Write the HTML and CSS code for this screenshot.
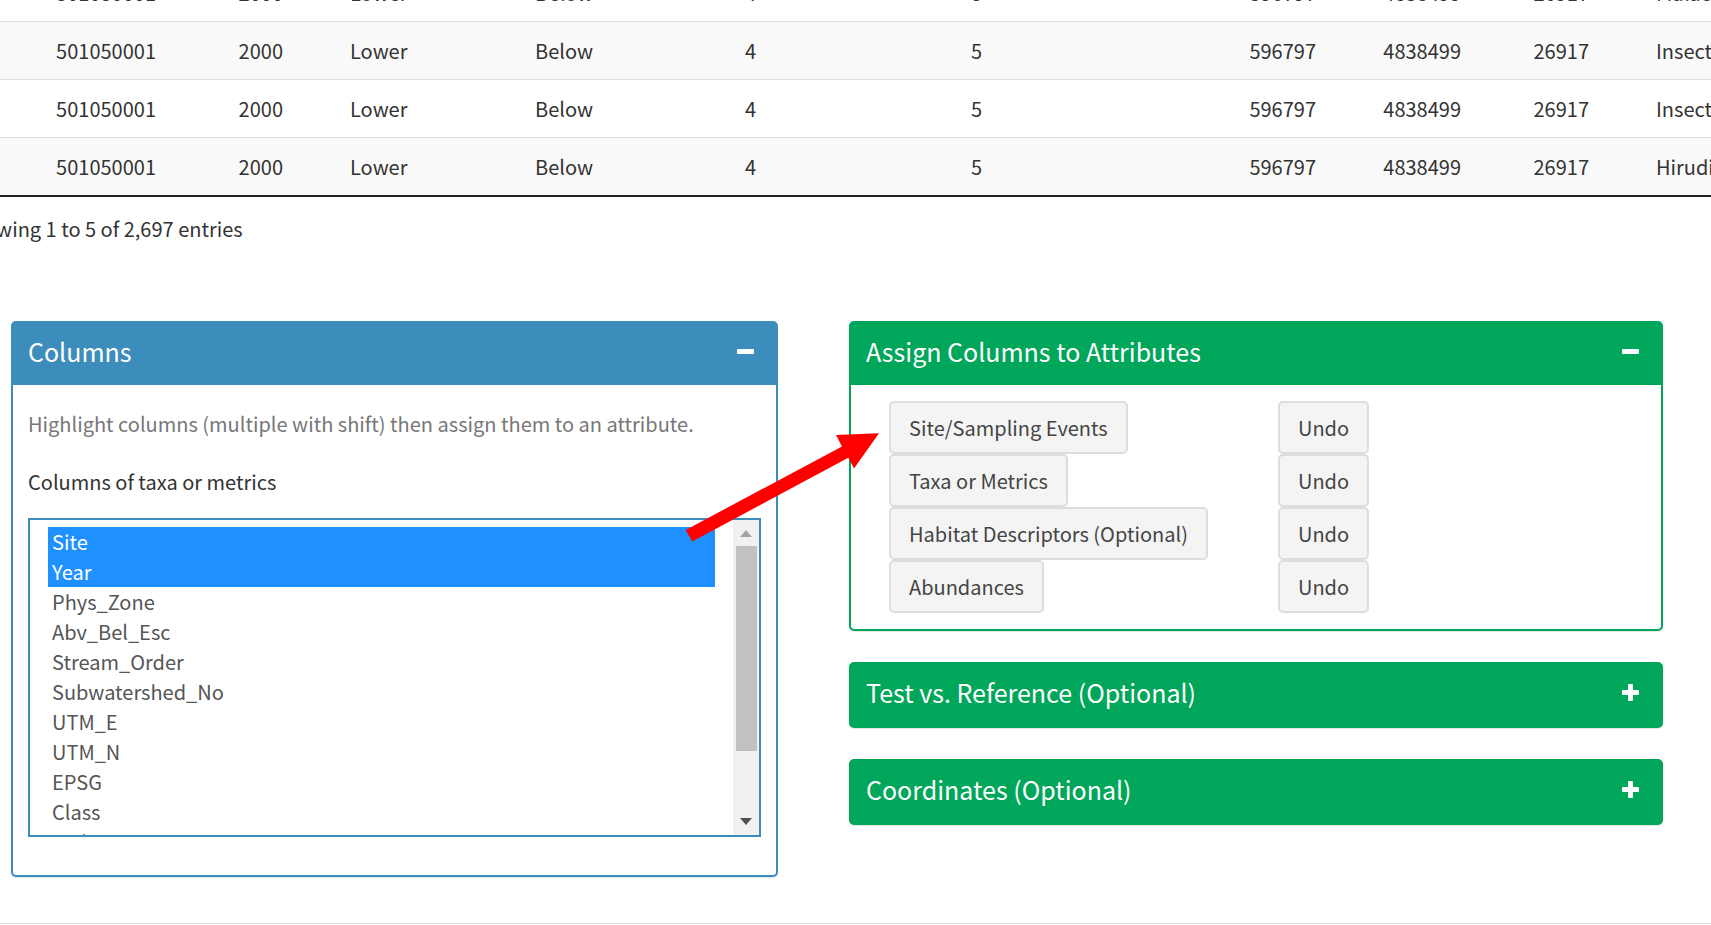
FILE: index.html
```html
<!DOCTYPE html>
<html lang="en">
<head>
<meta charset="utf-8">
<title>Assign Columns</title>
<link rel="stylesheet" href="styles.css">
</head>
<body>
<main class="page">
  <section class="data">
    <table class="grid">
      <colgroup>
        <col class="c-site"><col class="c-year"><col class="c-zone"><col class="c-esc"><col class="c-order">
        <col class="c-sub"><col class="c-east"><col class="c-north"><col class="c-epsg"><col class="c-class">
      </colgroup>
      <tbody>
        <tr><td>501050001</td><td>2000</td><td class="text">Lower</td><td class="text">Below</td><td>4</td><td>5</td><td>596797</td><td>4838499</td><td>26917</td><td class="text">Malacostraca</td></tr>
        <tr><td>501050001</td><td>2000</td><td class="text">Lower</td><td class="text">Below</td><td>4</td><td>5</td><td>596797</td><td>4838499</td><td>26917</td><td class="text">Insecta</td></tr>
        <tr><td>501050001</td><td>2000</td><td class="text">Lower</td><td class="text">Below</td><td>4</td><td>5</td><td>596797</td><td>4838499</td><td>26917</td><td class="text">Insecta</td></tr>
        <tr><td>501050001</td><td>2000</td><td class="text">Lower</td><td class="text">Below</td><td>4</td><td>5</td><td>596797</td><td>4838499</td><td>26917</td><td class="text">Hirudinea</td></tr>
      </tbody>
    </table>
    <p class="info">Showing 1 to 5 of 2,697 entries</p>
  </section>

  <div class="boxes">
    <section class="box blue">
      <header class="box-head">
        <h2>Columns</h2>
        <button class="tool" type="button" aria-label="Collapse"><svg width="17" height="17" viewBox="0 0 17 17"><rect x="0" y="6" width="17" height="5" rx="1"/></svg></button>
      </header>
      <div class="box-body">
        <p class="help">Highlight columns (multiple with shift) then assign them to an attribute.</p>
        <label class="label" for="cols">Columns of taxa or metrics</label>
        <div class="listbox">
          <select id="cols" multiple>
            <option selected>Site</option>
            <option selected>Year</option>
            <option>Phys_Zone</option>
            <option>Abv_Bel_Esc</option>
            <option>Stream_Order</option>
            <option>Subwatershed_No</option>
            <option>UTM_E</option>
            <option>UTM_N</option>
            <option>EPSG</option>
            <option>Class</option>
            <option>Order</option>
          </select>
          <div class="scroll" aria-hidden="true">
            <svg class="up" width="12" height="7" viewBox="0 0 12 7"><path d="M0 7 6 0l6 7z"/></svg>
            <span class="thumb"></span>
            <svg class="down" width="12" height="7" viewBox="0 0 12 7"><path d="M0 0h12L6 7z"/></svg>
          </div>
        </div>
      </div>
    </section>

    <div class="stack">
      <section class="box green">
        <header class="box-head">
          <h2>Assign Columns to Attributes</h2>
          <button class="tool" type="button" aria-label="Collapse"><svg width="17" height="17" viewBox="0 0 17 17"><rect x="0" y="6" width="17" height="5" rx="1"/></svg></button>
        </header>
        <div class="assign">
          <button class="btn" type="button">Site/Sampling Events</button><button class="btn" type="button">Undo</button>
          <button class="btn" type="button">Taxa or Metrics</button><button class="btn" type="button">Undo</button>
          <button class="btn" type="button">Habitat Descriptors (Optional)</button><button class="btn" type="button">Undo</button>
          <button class="btn" type="button">Abundances</button><button class="btn" type="button">Undo</button>
        </div>
      </section>
      <section class="box green">
        <header class="box-head">
          <h2>Test vs. Reference (Optional)</h2>
          <button class="tool" type="button" aria-label="Expand"><svg width="17" height="17" viewBox="0 0 17 17"><rect x="0" y="6" width="17" height="5" rx="1"/><rect x="6" y="0" width="5" height="17" rx="1"/></svg></button>
        </header>
      </section>
      <section class="box green">
        <header class="box-head">
          <h2>Coordinates (Optional)</h2>
          <button class="tool" type="button" aria-label="Expand"><svg width="17" height="17" viewBox="0 0 17 17"><rect x="0" y="6" width="17" height="5" rx="1"/><rect x="6" y="0" width="5" height="17" rx="1"/></svg></button>
        </header>
      </section>
    </div>

    <svg class="arrow" width="194" height="110" viewBox="685 433 194 110" aria-hidden="true"><path d="M685.6 530 842 446.4 836 435l43-1.800-25 35.300-5.700-10.700L692.300 541.400z"/></svg>
  </div>
</main>
</body>
</html>
```
FILE: styles.css
```css
* { box-sizing: border-box; }

body {
  margin: 0;
  background: #fff;
  color: #333;
  font: 20px/30px "Noto Sans CJK SC", "Open Sans", sans-serif;
}

h2, p { margin: 0; font-weight: 400; }

button, select { font: inherit; }

.page {
  overflow: hidden;
  border-bottom: 1px solid #dde0e8;
}

/* The data preview is scrolled: its first row and left edge are cut off */
.data { margin: -37px 0 0 -40px; }

.grid {
  width: 1857px;
  table-layout: fixed;
  border-collapse: separate;
  border-spacing: 0;
  border-bottom: 2px solid #222;
}

.c-site { width: 224px; }
.c-year { width: 127px; }
.c-zone { width: 185px; }
.c-esc { width: 155px; }
.c-order { width: 133px; }
.c-sub { width: 226px; }
.c-east { width: 334px; }
.c-north { width: 145px; }
.c-epsg { width: 128px; }
.c-class { width: 200px; }

.grid td {
  height: 58px;
  padding: 0 28px 0 0;
  border-top: 1px solid #ddd;
  text-align: right;
}

.grid td.text { padding: 0 0 0 39px; text-align: left; }

.grid tr:nth-child(even) td { background: #f9f9f9; }

.info { padding: 17px 0 0; }

.boxes {
  position: relative;
  display: grid;
  grid-template-columns: 767fr 814fr;
  gap: 71px;
  align-items: start;
  padding: 77px 48px 46px 11px;
}

.stack { display: grid; gap: 31px; }

.box {
  border: 2px solid;
  border-radius: 5px;
  box-shadow: 0 1px 1px rgba(0, 0, 0, 0.1);
}

.blue { border-color: #3c8dbc; }
.green { border-color: #00a65a; }
.blue .box-head { background: #3c8dbc; }
.green .box-head { background: #00a65a; }

.box-head {
  display: flex;
  justify-content: space-between;
  align-items: flex-start;
  padding: 13px 22px 19px 15px;
  color: #fff;
}

.box-head h2 { font-size: 25px; line-height: 30px; }

.tool {
  display: flex;
  align-items: center;
  height: 30px;
  padding: 0;
  border: 0;
  background: none;
}

.tool svg { fill: #fff; }

.box-body { padding: 24px 15px 38px; }

.help { color: #777; }

.label { display: block; margin: 28px 0 21px; }

.listbox {
  display: flex;
  height: 319px;
  border: 2px solid #3c8dbc;
}

.listbox select {
  flex: 1;
  min-width: 0;
  padding: 7px 18px 0;
  border: 0;
  outline: 0;
  border-radius: 0;
  background: #fff;
  color: #555;
  overflow: hidden;
}

.listbox option {
  height: 30px;
  min-height: 30px;
  padding: 0 4px;
  line-height: 30px;
}

.listbox option:checked {
  background: linear-gradient(#1e90ff, #1e90ff);
  color: #fff;
  -webkit-text-fill-color: #fff;
}

.scroll {
  display: flex;
  flex-direction: column;
  align-items: center;
  width: 26px;
  padding: 10px 0;
  background: #f1f1f1;
}

.thumb {
  width: 21px;
  height: 205px;
  margin-top: 9px;
  background: #c1c1c1;
}

.up { fill: #a3a3a3; }
.down { margin-top: auto; fill: #505050; }

.assign {
  display: grid;
  grid-template-columns: 389fr 383fr;
  justify-items: start;
  padding: 16px 0 16px 38px;
}

.btn {
  height: 53px;
  padding: 0 18px;
  border: 2px solid #ddd;
  border-radius: 5px;
  background: #f4f4f4;
  color: #444;
}

.arrow {
  position: absolute;
  left: 685px;
  top: 189px;
  fill: #f00;
}
```
